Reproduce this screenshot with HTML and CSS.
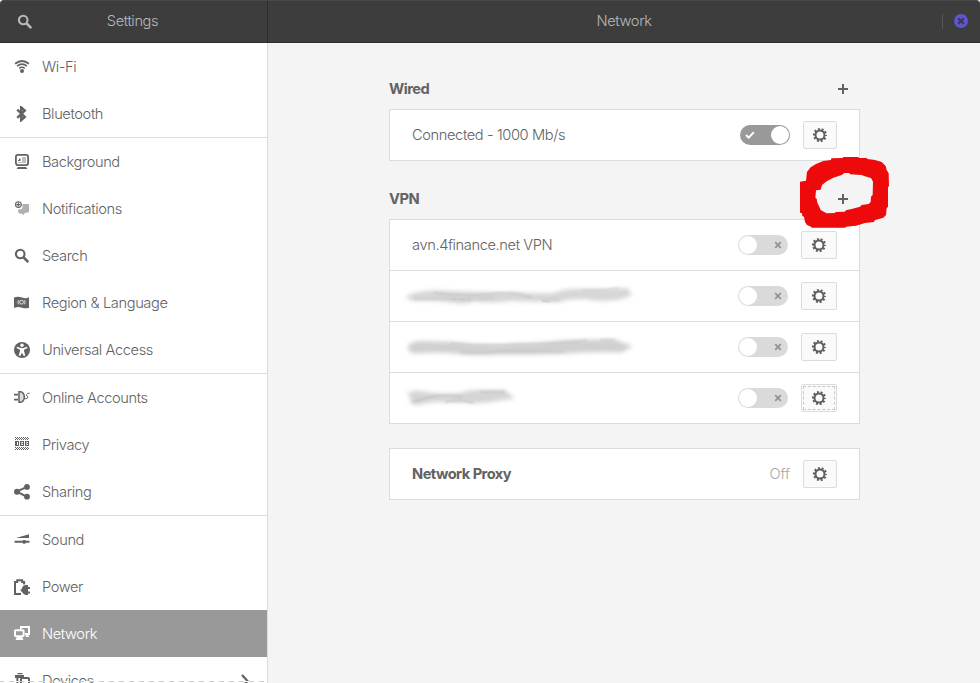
FILE: index.html
```html
<!DOCTYPE html>
<html lang="en">
<head>
<meta charset="utf-8">
<title>Settings</title>
<link rel="stylesheet" href="styles.css">
</head>
<body>
<svg class="defs" aria-hidden="true">
  <symbol id="search" viewBox="0 0 16 16"><circle cx="6.2" cy="6" r="4.3" fill="none" stroke="currentColor" stroke-width="2.1"/><path d="M9.2 9 14.3 14.1" stroke="currentColor" stroke-width="2.6"/></symbol>
  <symbol id="gear" viewBox="0 0 16 16"><circle cx="8" cy="8" r="4.5" fill="none" stroke="currentColor" stroke-width="2"/><circle cx="8" cy="8" r="6" fill="none" stroke="currentColor" stroke-width="2.1" stroke-dasharray="1.95 1.82" stroke-dashoffset=".975"/></symbol>
  <symbol id="plus" viewBox="0 0 10 10"><path d="M5 0v10M0 5h10" stroke="currentColor" stroke-width="2"/></symbol>
  <symbol id="check" viewBox="0 0 10 8"><path d="M1 4l2.7 2.6L8.8 1.2" fill="none" stroke="currentColor" stroke-width="2"/></symbol>
  <symbol id="cross" viewBox="0 0 8 8"><path d="M1.2 1.2l5.6 5.6M6.8 1.2 1.2 6.8" stroke="currentColor" stroke-width="1.7"/></symbol>
</svg>

<header class="titlebar">
  <div class="title-left"><svg class="icon"><use href="#search"/></svg><span>Settings</span></div>
  <div class="title-right"><span>Network</span>
    <div class="window-controls"><svg viewBox="0 0 14 14"><circle cx="7" cy="7" r="7"/><path d="M4.2 4.2l5.6 5.6M9.8 4.2l-5.6 5.6" stroke="#3a3a48" stroke-width="2"/></svg></div>
  </div>
</header>

<div class="window">
  <nav class="sidebar">
    <div class="group">
      <div class="item"><svg class="icon" viewBox="0 0 16 16"><g fill="none" stroke="currentColor"><path d="M1.1 4.7Q8-.8 14.9 4.7" stroke-width="1.8"/><path d="M3.1 7.2Q8 3.2 12.9 7.2" stroke-width="1.7"/><path d="M5.2 9.4Q8 7.2 10.8 9.4" stroke-width="1.5"/></g><circle cx="8" cy="12" r="2"/></svg>Wi-Fi</div>
      <div class="item"><svg class="icon" viewBox="0 0 16 16"><path d="M3.3 3.6 10.8 11 7.2 14.2V1.4L10.8 4.6 3.3 11.8" fill="none" stroke="currentColor" stroke-width="2.4"/></svg>Bluetooth</div>
    </div>
    <div class="group">
      <div class="item"><svg class="icon" viewBox="0 0 16 16"><rect x="1.9" y=".9" width="12.2" height="10.2" rx="2" fill="none" stroke="currentColor" stroke-width="1.8"/><path d="M8 3h4v6H4V8h4z" opacity=".4"/><path d="M4 7V6h1V4.5h1.5V7zM4 13h8l1.5 2h-11z"/></svg>Background</div>
      <div class="item"><svg class="icon" viewBox="0 0 16 16"><path d="M8.5 3H14q1 0 1 1v6q0 1.7-2 1.7h-2L9.5 14 8 12.7H6Q4 12 4 10V8.5h2q2.5 0 2.5-2z" opacity=".5"/><circle cx="4.4" cy="3.6" r="2.9" fill="none" stroke="currentColor" stroke-width="1.1"/><path d="M3.8 1.6H5V3h1.4v1.2H5v1.4H3.8V4.2H2.4V3h1.4z"/></svg>Notifications</div>
      <div class="item"><svg class="icon"><use href="#search"/></svg>Search</div>
      <div class="item"><svg class="icon" viewBox="0 0 16 16"><path d="M0 2.5Q4 1.1 8 2.500t7-.3v10.5q-3 1.3-7 0t-8 .2z"/><g fill="none" stroke="#fff" stroke-width=".8"><circle cx="7.5" cy="7.2" r="1.9"/><path d="M4.8 5q-1.2 2.2 0 4.5M10.2 5q1.2 2.2 0 4.5" opacity=".8"/><path d="M3.2 5.5V9M11.8 5.5V9" opacity=".35"/></g></svg>Region &amp; Language</div>
      <div class="item"><svg class="icon" viewBox="0 0 16 16"><circle cx="8" cy="8" r="8"/><circle cx="8" cy="3.2" r="1.7" fill="#fff"/><path d="M3 4.7 6.8 6h2.4L13 4.7l.5 1.3L10 7.7V9l1.3 4.5-1.5.5L8 10.7 6.2 14l-1.5-.5L6 9V7.7L2.5 6z" fill="#fff"/></svg>Universal Access</div>
    </div>
    <div class="group">
      <div class="item"><svg class="icon" viewBox="0 0 16 16"><path d="M5 1.7h1.6Q10.3 2.5 10.3 7T6.6 12.3H5z" fill="#ddd" stroke="currentColor" stroke-width="1.5"/><path d="M0 3.8h4v1.7H0zM0 8.8h4v1.7H0z"/><path d="M10.5 8.6h1.7q1.8-.2 1.6-1.7-1.7-1-1.1-2.5.6-1.4 3-1.2" fill="none" stroke="currentColor"/></svg>Online Accounts</div>
      <div class="item"><svg class="icon" viewBox="0 0 16 16"><g fill="none" stroke="currentColor" stroke-dasharray="1 1"><path d="M1 .5h14M1 2.5h14M1 10.5h14M1 12.5h14M2 1.5h13M2 11.5h13"/></g><path d="M1 4h2v5H1zM4 4h1v5H4zM3 4h1v1H3zM3 8h1v1H3zM6 4h4v1H6zM6 4h1.4v5H6zM9 4h1v5H9zM6 8h4v1H6zM8 6h1v1H8zM11 4h4v1h-4zM11 4h1.4v5H11zM14 4h1v5h-1zM13 6h1v1h-1zM11 8h4v1h-4z"/></svg>Privacy</div>
      <div class="item"><svg class="icon" viewBox="0 0 16 16"><path d="M13 2.6 3 7.7l10 5.2" fill="none" stroke="currentColor" stroke-width="2"/><circle cx="3" cy="7.7" r="3"/><circle cx="13" cy="2.9" r="2.9"/><circle cx="13" cy="12.7" r="2.9"/></svg>Sharing</div>
    </div>
    <div class="group">
      <div class="item"><svg class="icon" viewBox="0 0 16 16"><path d="M2 6 15 2.2V6zM.5 8.8h8L9.3 8h1.8l.8.8h3.6v2h-3.6l-.8.9H9.3l-.8-.9h-8z"/></svg>Sound</div>
      <div class="item"><svg class="icon" viewBox="0 0 16 16"><path d="M7 14.9H1V3h2.2V1.2h5V3h1.9v2.5" fill="none" stroke="currentColor" stroke-width="2"/><path d="M7.5 10.3l1.5-3.2L11.5 6H14v2h2v2h-2v2.5h2v2h-2V16h-2.5L9 14.5 8 12.7 6.6 12v-1.4z"/></svg>Power</div>
      <div class="item selected"><svg class="icon" viewBox="0 0 16 16"><path d="M7 3V1.1h8v7h-4" fill="none" stroke="currentColor" stroke-width="2"/><path d="M12 8h2l1.2 3H11.5z"/><rect x="1" y="4.2" width="8.6" height="6" rx="1" fill="none" stroke="currentColor" stroke-width="2"/><path d="M3 11h5l1.5 3h-8z"/></svg>Network</div>
      <div class="item"><svg class="icon" viewBox="0 0 16 16"><path d="M3.5 0h5v1.2h-5zM1 2h9v3H1zM2.4 5h2v5h-2z"/><rect x="7" y="5" width="8" height="9" rx="1" fill="none" stroke="currentColor" stroke-width="2"/></svg>Devices<svg class="chevron" viewBox="0 0 8 14"><path d="M1 1l5.5 6L1 13" fill="none" stroke="currentColor" stroke-width="2.2"/></svg></div>
    </div>
    <div class="undershoot"></div>
  </nav>

  <main class="content">
    <div class="heading"><h2>Wired</h2><svg class="plus"><use href="#plus"/></svg></div>
    <section class="panel">
      <div class="row"><span class="name">Connected - 1000 Mb/s</span><div class="switch on"><svg class="check"><use href="#check"/></svg></div><button class="options"><svg class="icon"><use href="#gear"/></svg></button></div>
    </section>

    <div class="heading"><h2>VPN</h2><svg class="plus"><use href="#plus"/></svg></div>
    <section class="panel vpn">
      <div class="row"><span class="name">avn.4finance.net VPN</span><div class="switch"><svg class="cross"><use href="#cross"/></svg></div><button class="options"><svg class="icon"><use href="#gear"/></svg></button></div>
      <div class="row"><svg class="smudge" viewBox="0 0 240 50"><g class="soft"><path d="M5 26Q16 19 36 19.500T80 21t34 0q16 2 40 1 12-5 31-4t43-1L232 24 222 28Q204 32 184 28q-16 0-25 3-22 0-49-1-20 3-35 0-8 4-20 2-20-3-42-2z" fill="#d6d6d6"/></g><g class="streak" fill="none" stroke="#c2c2c2"><path d="M14 28h36q25 2 43-1" stroke-width="1.5"/><path d="M34 22q30 4 55 1t43 4" stroke-width="2"/><path d="M142 29h18" stroke-width="1.5"/><path d="M182 19q20 1 37-2" stroke-width="1.5"/></g><path d="M52 28l3 1 1-2M60 27l3 2 2-2M68 29l3-2M142 30l8 1" fill="none" stroke="#b8b8b8" stroke-width=".6"/></svg><div class="switch"><svg class="cross"><use href="#cross"/></svg></div><button class="options"><svg class="icon"><use href="#gear"/></svg></button></div>
      <div class="row"><svg class="smudge" viewBox="0 0 240 50"><g class="soft"><path d="M8 25Q9 19 22 19t35 1.500q30 4 59 1 25 0 45-3 20-1 54-1l18 7-12 6q-30-1-54 1-40 2-68 1-20 1-37 0-18-3-45-1-8 0-9-5z" fill="#d0d0d0"/></g><g class="streak" fill="none" stroke="#c0c0c0" stroke-width="1.5"><path d="M50 21q14 2 29 2t53-1 55-4M60 30q15 2 35 0t69 0M200 18h15"/></g></svg><div class="switch"><svg class="cross"><use href="#cross"/></svg></div><button class="options"><svg class="icon"><use href="#gear"/></svg></button></div>
      <div class="row"><svg class="smudge" viewBox="0 0 240 50"><g class="soft"><path d="M7 20q9-4 19-1 17 3 34 1 12-4 23-3h22l10 9-13 1q-14 4-29 3-13-1-30-1-16 0-24 3-12 0-8-6z" fill="#d5d5d5"/></g><g class="streak" fill="none" stroke="#b8b8b8" stroke-width="1.5"><path d="M13 29l13-4q17-5 37-1M45 29q15-3 29 1M80 19h25"/></g></svg><div class="switch"><svg class="cross"><use href="#cross"/></svg></div><button class="options focused"><svg class="icon"><use href="#gear"/></svg></button></div>
    </section>

    <section class="panel proxy">
      <div class="row"><span class="name strong">Network Proxy</span><span class="status">Off</span><button class="options"><svg class="icon"><use href="#gear"/></svg></button></div>
    </section>
  </main>
</div>

<svg class="marker" viewBox="0 0 540 510"><path fill-rule="evenodd" d="M240 335L258 332 261 306 272 292 288 282 310 273 333 270 334 265 368 264 370 261 415 261 417 264 440 264 442 267 465 270 485 276 497 288 500 300 506 310 507 348 504 352 504 410 500 415 498 435 490 443 464 451 462 456 435 459 408 467 378 470 376 473 275 473 273 470 261 465 255 456 252 440 247 438 246 430 240 428ZM288 361L286 383 290 386 292 398 298 410 302 420 314 427 320 430 345 429 347 426 374 425 378 421 395 417 420 410 425 405 446 402 452 396 453 380 458 375 459 335 453 324 432 318 425 315 390 313 388 309 373 309 365 315 340 323 320 334 306 345 302 359Z"/></svg>
</body>
</html>
```
FILE: styles.css
```css
* { box-sizing: border-box; }
body {
  margin: 0;
  width: 980px;
  height: 683px;
  overflow: hidden;
  position: relative;
  background: #f4f4f4;
  color: #626262;
  font: 360 14.67px/20px Inter, "Liberation Sans", sans-serif;
  letter-spacing: -0.4px;
}
svg { display: block; flex: none; fill: currentColor; }
.defs { position: absolute; width: 0; height: 0; }
.icon { width: 16px; height: 16px; }

.titlebar {
  display: flex;
  height: 43px;
  background: #3d3d3d;
  border-bottom: 1px solid #2d2d2d;
  border-top: 1px solid #484848;
  border-radius: 4px 4px 0 0;
  color: #b8b8bd;
}
.title-left {
  width: 268px;
  border-right: 1px solid #2d2d2d;
  display: grid;
  grid-template-columns: 33px 1fr 35px;
  align-items: center;
  text-align: center;
}
.title-left span, .title-right > span { padding-bottom: 2px; }
.title-left .icon { margin-left: 17px; }
.title-right {
  flex: 1;
  display: grid;
  grid-template-columns: 38px 1fr 38px;
  align-items: center;
  text-align: center;
}
.title-right > span { grid-column: 2; }
.window-controls {
  height: 15px;
  padding-left: 11px;
  border-left: 1px solid #575757;
}
.window-controls svg { width: 14px; height: 14px; fill: #5e55d0; }

.window { display: flex; height: 640px; }
.sidebar {
  position: relative;
  width: 268px;
  height: 640px;
  overflow: hidden;
  background: #fff;
  border-right: 1px solid #dcdcdc;
}
.group + .group { border-top: 1px solid #dcdcdc; }
.item {
  height: 47px;
  padding: 0 18px 0 14px;
  display: flex;
  align-items: center;
  gap: 12px;
}
.selected { background: #999; color: #fff; }
.chevron { width: 8px; height: 14px; margin-left: auto; }
.undershoot {
  position: absolute;
  left: 0;
  right: 0;
  bottom: 1px;
  height: 1px;
  background: repeating-linear-gradient(90deg, #ccc 0 4px, #fff 4px 9px, #ccc 9px 10px);
}

.content { width: 471px; margin-left: 121px; padding-top: 36px; }
.heading {
  display: flex;
  justify-content: space-between;
  align-items: center;
  height: 20px;
  margin-bottom: 10px;
  padding-right: 12px;
}
h2 { margin: 0; font: inherit; font-weight: 700; letter-spacing: -0.52px; }
.plus { width: 10px; height: 10px; }
.panel { background: #fff; border: 1px solid #dcdcdc; margin-bottom: 28px; }
.panel.vpn { margin-bottom: 24px; }
.row {
  height: 50px;
  padding: 0 22px;
  display: flex;
  align-items: center;
}
.row + .row { height: 51px; border-top: 1px solid #dcdcdc; }
.name { margin-right: auto; }
.strong { font-weight: 700; letter-spacing: -0.54px; }
.status { color: #a8a8a8; margin-right: 13px; letter-spacing: -0.1px; }
.switch {
  width: 50px;
  height: 20px;
  margin-right: 13px;
  border-radius: 10px;
  background: #dadada;
  color: #929292;
  display: flex;
  align-items: center;
  justify-content: space-between;
  padding: 0 6px 0 1px;
}
.switch::before { content: ""; width: 18px; height: 18px; border-radius: 50%; background: #fff; }
.switch.on {
  flex-direction: row-reverse;
  padding: 0 1px 0 5px;
  background: #999;
  color: #fff;
}
.check { width: 10px; height: 8px; }
.cross { width: 8px; height: 8px; }
.options {
  width: 34px;
  height: 28px;
  padding: 0;
  border: 1px solid #dcdcdc;
  border-radius: 2px;
  background: #fafafa;
  color: #5e5e5e;
  display: flex;
  align-items: center;
  justify-content: center;
}
.vpn .options { width: 36px; }
.focused { position: relative; }
.focused::after { content: ""; position: absolute; inset: 1px; border: 1px dashed #c8c8c8; }
.smudge { width: 240px; height: 50px; margin-left: -12px; margin-right: auto; }
.soft { filter: blur(2.2px); }
.streak { filter: blur(1px); opacity: .7; }

.marker {
  position: absolute;
  left: 720px;
  top: 70px;
  width: 180px;
  height: 170px;
  fill: #ee0a0a;
}
```
